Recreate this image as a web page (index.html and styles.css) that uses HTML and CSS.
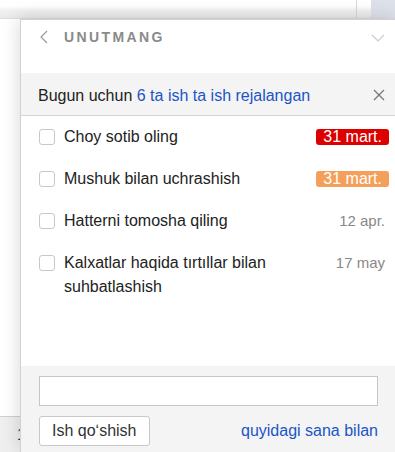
FILE: index.html
```html
<!DOCTYPE html>
<html lang="uz">
<head>
  <meta charset="UTF-8" />
  <meta name="viewport" content="width=device-width, initial-scale=1.0"/>
  <title>Unutmang</title>
  <link rel="stylesheet" href="styles.css">
</head>
<body>

  <div class="page">
    <div class="toolbar">
      <div class="toolbar-fill"></div>
      <div class="toolbar-cell"></div>
      <div class="toolbar-blue"></div>
    </div>
    <div class="page-body"></div>
    <div class="page-footer">1</div>
  </div>

  <div class="panel">
    <div class="panel-head">
      <svg class="back" width="8" height="14" viewBox="0 0 8 14">
        <polyline points="7,1 1,7 7,13" fill="none" stroke="#9a9a9a" stroke-width="1.2"/>
      </svg>
      <span class="title">UNUTMANG</span>
      <svg class="collapse" width="14" height="8" viewBox="0 0 14 8">
        <polyline points="1,1 7,7 13,1" fill="none" stroke="#c9ccd6" stroke-width="1.2"/>
      </svg>
    </div>

    <div class="summary">
      <span>Bugun uchun <a href="#" class="link">6 ta ish ta ish rejalangan</a></span>
      <svg class="close" width="12" height="12" viewBox="0 0 12 12">
        <path d="M1 1 L11 11 M11 1 L1 11" stroke="#777" stroke-width="1.3" fill="none"/>
      </svg>
    </div>

    <ul class="tasks">
      <li class="task">
        <span class="check"></span>
        <span class="task-text">Choy sotib oling</span>
        <span class="badge red">31 mart.</span>
      </li>
      <li class="task">
        <span class="check"></span>
        <span class="task-text">Mushuk bilan uchrashish</span>
        <span class="badge orange">31 mart.</span>
      </li>
      <li class="task">
        <span class="check"></span>
        <span class="task-text">Hatterni tomosha qiling</span>
        <span class="date">12 apr.</span>
      </li>
      <li class="task">
        <span class="check"></span>
        <span class="task-text">Kalxatlar haqida tırtıllar bilan suhbatlashish</span>
        <span class="date">17 may</span>
      </li>
    </ul>

    <div class="panel-foot">
      <input type="text" class="new-task" />
      <div class="foot-row">
        <button class="add-btn">Ish qoʻshish</button>
        <a href="#" class="link">quyidagi sana bilan</a>
      </div>
    </div>
  </div>

</body>
</html>
```

FILE: styles.css
```css
body {
  margin: 0;
  font-family: "Liberation Sans", Arial, sans-serif;
  font-size: 16px;
  color: #222;
  background: #fff;
  overflow: hidden;
}

.page {
  height: 452px;
  display: flex;
  flex-direction: column;
}

.toolbar {
  height: 18px;
  display: flex;
  border-bottom: 1px solid #dcdcdc;
  background: linear-gradient(#fff 0, #fff 6px, #f1f1f1 10px, #e9e9e9 18px);
}

.toolbar-fill {
  flex: 1;
}

.toolbar-cell {
  width: 14px;
  border-left: 1px solid #d6d6d6;
}

.toolbar-blue {
  width: 24px;
  background: #dde1ea;
}

.page-body {
  flex: 1;
}

.page-footer {
  height: 36px;
  border-top: 1px solid #cfcfcf;
  background: #efefef;
  padding: 6px 0 0 17px;
  box-sizing: border-box;
  color: #333;
  line-height: 24px;
}

.panel {
  position: absolute;
  top: 19px;
  left: 20px;
  right: 0;
  height: 433px;
  box-sizing: border-box;
  background: #fff;
  border-top: 1px solid #d2d2d2;
  border-left: 1px solid #d2d2d2;
  box-shadow: 0 0 18px rgba(0, 0, 0, 0.16);
  display: flex;
  flex-direction: column;
}

.panel-head {
  height: 53px;
  box-sizing: border-box;
  padding: 10px 10px 0 19px;
  display: flex;
  align-items: flex-start;
}

.panel-head .back {
  margin-right: 16px;
}

.title {
  font-size: 14px;
  line-height: 14px;
  font-weight: bold;
  letter-spacing: 2.4px;
  color: #8a8a8a;
}

.panel-head .collapse {
  margin-left: auto;
  margin-top: 4px;
}

.summary {
  height: 43px;
  flex-shrink: 0;
  box-sizing: border-box;
  padding: 4px 10px 0 17px;
  background: #f4f4f4;
  border-bottom: 1px solid #d4d4d4;
  display: flex;
  align-items: center;
  justify-content: space-between;
  line-height: 24px;
}

.summary .close {
  margin-top: -3px;
}

.link {
  color: #1b55c6;
  text-decoration: none;
}

.tasks {
  list-style: none;
  margin: 0;
  padding: 0;
  flex: 1;
}

.task {
  display: flex;
  align-items: flex-start;
  padding: 9px 6px 9px 18px;
  line-height: 24px;
}

.check {
  width: 16px;
  height: 16px;
  box-sizing: border-box;
  border: 1px solid #c8c8c8;
  border-radius: 3px;
  background: #fff;
  margin: 4px 9px 0 0;
  flex-shrink: 0;
}

.task-text {
  flex: 1;
  padding-right: 12px;
}

.badge {
  flex-shrink: 0;
  margin-top: 4px;
  padding: 0 7px;
  height: 16px;
  line-height: 16px;
  border-radius: 3px;
  color: #fff;
}

.badge.red {
  background: #dc0000;
}

.badge.orange {
  background: #f5a05a;
}

.date {
  flex-shrink: 0;
  font-size: 15px;
  color: #888;
  padding-right: 4px;
}

.panel-foot {
  flex-shrink: 0;
  background: #f4f4f4;
  padding: 10px 17px 0 18px;
  height: 86px;
  box-sizing: border-box;
}

.new-task {
  display: block;
  width: 100%;
  height: 30px;
  box-sizing: border-box;
  border: 1px solid #c6c6c6;
  background: #fff;
  margin: 0;
  font: inherit;
}

.foot-row {
  margin-top: 10px;
  display: flex;
  align-items: center;
  justify-content: space-between;
}

.add-btn {
  height: 30px;
  padding: 0 12px;
  font: inherit;
  color: #333;
  background: #fff;
  border: 1px solid #c8c8c8;
  border-radius: 3px;
}
```
